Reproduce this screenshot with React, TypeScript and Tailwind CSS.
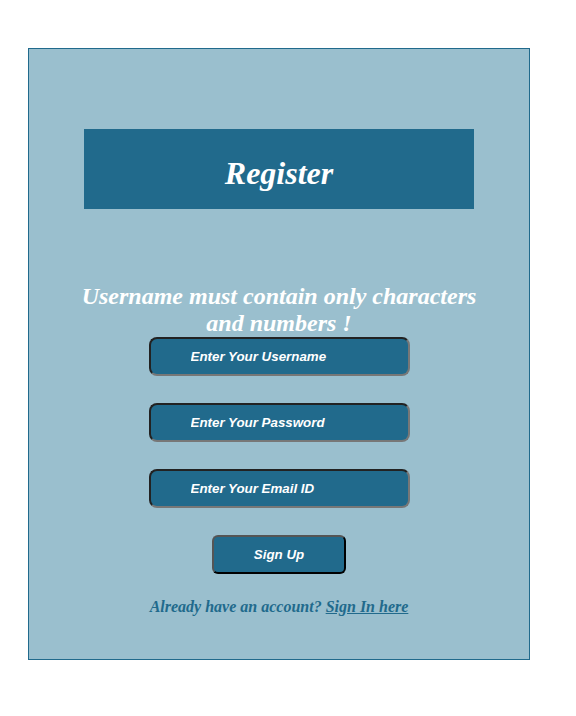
import React from "react";

export default function App() {
  return (
    <div className="min-h-[716px] w-[576px] bg-white pt-[48px] pl-[28px]">
      <div className="w-[502px] h-[612px] bg-[#9abfce] border border-[#216a8c] flex flex-col items-center">
        {/* Header */}
        <div className="mt-[80px] w-[390px] h-[80px] bg-[#216a8c] flex items-center justify-center">
          <h1 className="text-white text-[32px] font-bold italic font-['Liberation_Serif',serif] mt-[8px]">
            Register
          </h1>
        </div>

        <p className="mt-[74px] w-[420px] text-center text-white text-[24px] leading-[27px] font-bold italic font-['Liberation_Serif',serif]">
          Username must contain only characters and numbers !
        </p>

        {/* Form */}
        <form className="flex flex-col items-center gap-[27px]">
          <input
            type="text"
            placeholder="Enter Your Username"
            className="w-[261px] h-[39px] rounded-[8px] bg-[#216a8c] border-2 border-t-[#222] border-l-[#222] border-b-[#777] border-r-[#777] pl-[40px] text-[13.333px] font-bold italic text-white placeholder:text-white font-['Liberation_Sans',sans-serif] outline-none"
          />
          <input
            type="password"
            placeholder="Enter Your Password"
            className="w-[261px] h-[39px] rounded-[8px] bg-[#216a8c] border-2 border-t-[#222] border-l-[#222] border-b-[#777] border-r-[#777] pl-[40px] text-[13.333px] font-bold italic text-white placeholder:text-white font-['Liberation_Sans',sans-serif] outline-none"
          />
          <input
            type="email"
            placeholder="Enter Your Email ID"
            className="w-[261px] h-[39px] rounded-[8px] bg-[#216a8c] border-2 border-t-[#222] border-l-[#222] border-b-[#777] border-r-[#777] pl-[40px] text-[13.333px] font-bold italic text-white placeholder:text-white font-['Liberation_Sans',sans-serif] outline-none"
          />
          <button
            type="button"
            className="w-[134px] h-[39px] rounded-[6px] bg-[#216a8c] border-2 border-t-[#555] border-l-[#555] border-b-black border-r-black text-[13.333px] font-bold italic text-white font-['Liberation_Sans',sans-serif]"
          >
            Sign Up
          </button>
        </form>

        <p className="mt-[21px] text-[16px] font-bold italic text-[#216a8c] font-['Liberation_Serif',serif]">
          Already have an account?{" "}
          <a href="#" className="underline">
            Sign In here
          </a>
        </p>
      </div>
    </div>
  );
}
